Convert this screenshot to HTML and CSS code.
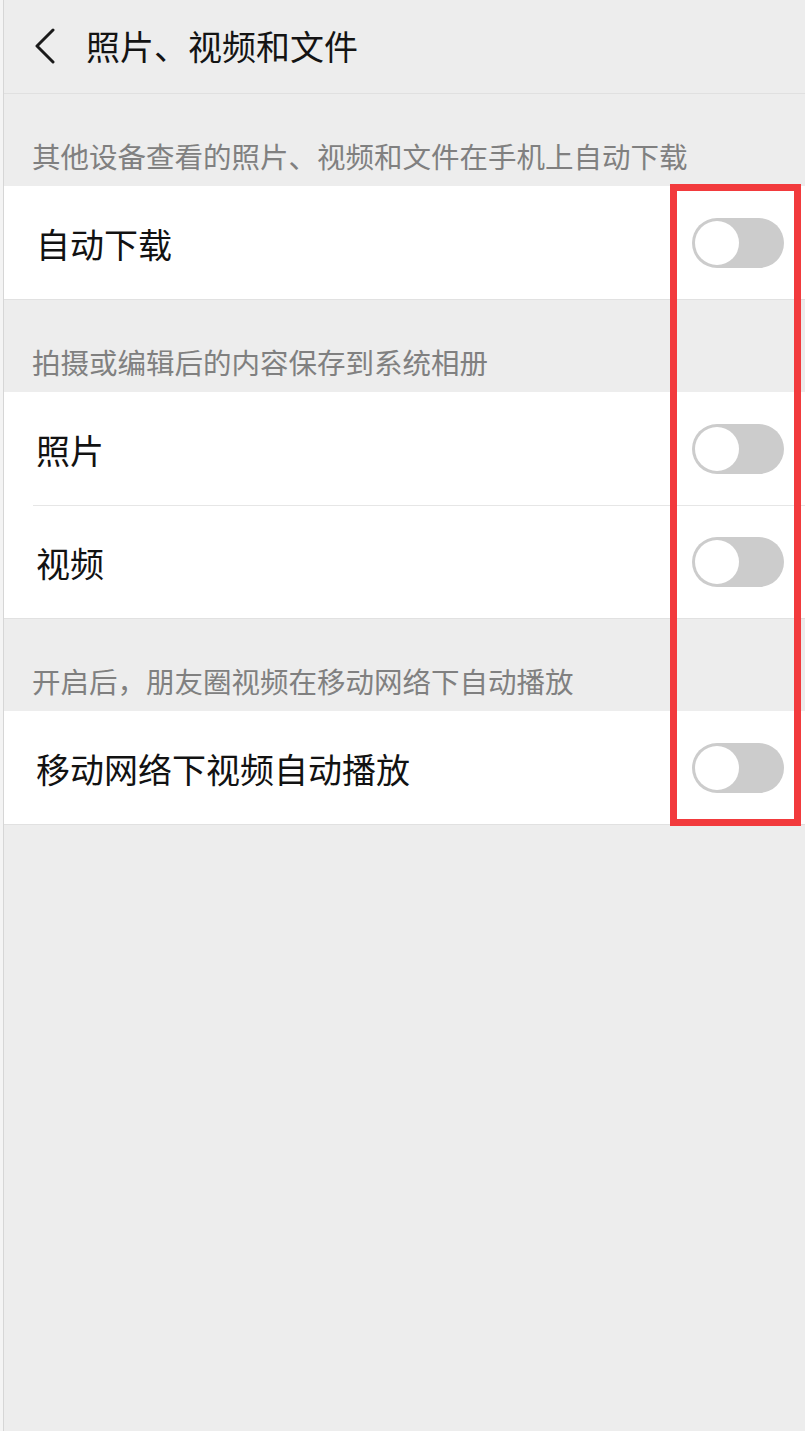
FILE: index.html
```html
<!DOCTYPE html>
<html lang="zh-CN">
<head>
<meta charset="utf-8">
<title>照片、视频和文件</title>
<link rel="stylesheet" href="styles.css">
</head>
<body>
<div class="frame">
  <header class="topbar">
    <svg class="back" width="24" height="36" viewBox="0 0 24 36" aria-hidden="true">
      <path d="M19 2 L3 18 L19 34" fill="none" stroke="#1a1a1a" stroke-width="3" stroke-linecap="round" stroke-linejoin="round"/>
    </svg>
    <h1 class="title">照片、视频和文件</h1>
  </header>

  <main class="content">
    <div class="section-label">其他设备查看的照片、视频和文件在手机上自动下载</div>
    <div class="group">
      <div class="row"><span class="row-text">自动下载</span><span class="toggle"><span class="knob"></span></span></div>
    </div>

    <div class="section-label">拍摄或编辑后的内容保存到系统相册</div>
    <div class="group">
      <div class="row"><span class="row-text">照片</span><span class="toggle"><span class="knob"></span></span></div>
      <div class="row"><span class="row-text">视频</span><span class="toggle"><span class="knob"></span></span></div>
    </div>

    <div class="section-label">开启后，朋友圈视频在移动网络下自动播放</div>
    <div class="group">
      <div class="row"><span class="row-text">移动网络下视频自动播放</span><span class="toggle"><span class="knob"></span></span></div>
    </div>
  </main>

  <div class="highlight" aria-hidden="true"></div>
</div>
</body>
</html>
```

FILE: styles.css
```css
* { box-sizing: border-box; }

html, body {
  margin: 0;
  padding: 0;
}

body {
  background: #f4f4f4;
  font-family: "Noto Sans CJK SC", "Noto Sans", "Liberation Sans", sans-serif;
  color: #111111;
}

.frame {
  position: relative;
  margin-left: 3px;
  border-left: 1px solid #d6d6d6;
  background: #ededed;
  min-height: 1431px;
  display: flex;
  flex-direction: column;
}

.topbar {
  height: 94px;
  border-bottom: 1px solid #e0e0e0;
  display: flex;
  align-items: center;
  padding-left: 30px;
  padding-bottom: 2px;
}

.back {
  display: block;
  flex: none;
}

.title {
  margin: 0 0 0 28px;
  font-size: 34px;
  font-weight: 400;
  line-height: 44px;
  color: #141414;
}

.content {
  display: flex;
  flex-direction: column;
}

.section-label {
  height: 92px;
  display: flex;
  align-items: flex-end;
  padding-left: 28px;
  padding-bottom: 10px;
  font-size: 28.5px;
  line-height: 40px;
  color: #808080;
}

.group {
  background: #ffffff;
  border-bottom: 1px solid #e1e1e1;
  display: flex;
  flex-direction: column;
}

.row {
  height: 113px;
  display: flex;
  align-items: center;
  justify-content: space-between;
  padding-left: 32px;
  padding-right: 21px;
}

.row + .row {
  border-top: 1px solid #e6e6e6;
  margin-left: 29px;
  padding-left: 3px;
}

.row-text {
  font-size: 34px;
  line-height: 44px;
  color: #121212;
  padding-top: 2px;
}

.toggle {
  width: 92px;
  height: 50px;
  border-radius: 25px;
  background: #cccccc;
  padding: 3px;
  display: flex;
  align-items: center;
  flex: none;
}

.knob {
  width: 44px;
  height: 44px;
  border-radius: 50%;
  background: #ffffff;
  display: block;
}

.highlight {
  position: absolute;
  left: 666px;
  top: 184px;
  width: 131px;
  height: 642px;
  border: 7px solid #f23a3d;
  pointer-events: none;
}
```
